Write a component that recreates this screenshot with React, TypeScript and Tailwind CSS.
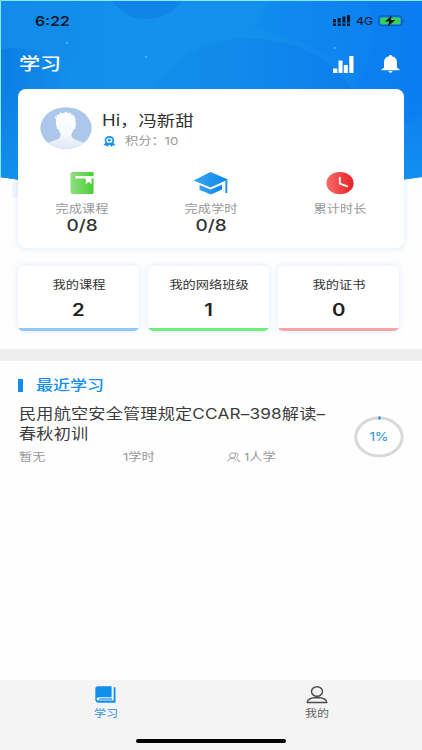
import type { ReactNode } from "react"

interface ITextProps {
  children: ReactNode
  className?: string
}

// Extended-width text, anchored to its left edge
const WideText: React.FC<ITextProps> = ({ children, className = "" }) => (
  <span
    className={`block w-max origin-left scale-x-[1.2] whitespace-pre ${className}`}
  >
    {children}
  </span>
)

// Extended-width text, centered in its parent
const CenterText: React.FC<ITextProps> = ({ children, className = "" }) => (
  <span
    className={`block w-max origin-center scale-x-[1.2] whitespace-pre ${className}`}
  >
    {children}
  </span>
)

const HeaderBackdrop = () => (
  <svg
    className="absolute left-0 top-0"
    width="422"
    height="200"
    viewBox="0 0 422 200"
  >
    <defs>
      <linearGradient id="sky" x1="0" y1="0" x2="1" y2="0">
        <stop offset="0" stopColor="#1289ea" />
        <stop offset="0.3" stopColor="#1391ec" />
        <stop offset="0.6" stopColor="#1290ec" />
        <stop offset="1" stopColor="#0c7df2" />
      </linearGradient>
      <linearGradient id="hill" x1="0" y1="0" x2="1" y2="0">
        <stop offset="0" stopColor="#0b7be2" />
        <stop offset="1" stopColor="#1390ec" />
      </linearGradient>
      <linearGradient id="side" x1="0" y1="0" x2="0" y2="1">
        <stop offset="0" stopColor="#1292ec" stopOpacity="0" />
        <stop offset="1" stopColor="#1494ee" />
      </linearGradient>
      <linearGradient id="arc" x1="0" y1="0" x2="1" y2="0">
        <stop offset="0" stopColor="#0f8aea" stopOpacity="0.4" />
        <stop offset="1" stopColor="#0a7aea" stopOpacity="0.6" />
      </linearGradient>
      <clipPath id="headerShape">
        <path d="M0 0H422V177Q211 210 0 177Z" />
      </clipPath>
    </defs>
    <path d="M12 182h20v16H12z" fill="#f1f6fe" />
    <g clipPath="url(#headerShape)">
      <rect width="422" height="200" fill="url(#sky)" />
      <path d="M104 0Q104 34 74 60Q50 46 0 48V0Z" fill="#128dea" opacity="0.5" />
      <ellipse cx="147" cy="-12" rx="38" ry="31" fill="#0f83e6" opacity="0.8" />
      <path d="M0 49C25 45 60 55 74 74V200H0Z" fill="url(#hill)" opacity="0.8" />
      <path d="M254 28Q266 2 275 0H422V140Q380 60 254 28Z" fill="#0d7ff0" opacity="0.25" />
      <path d="M151 89C180 50 212 38 248 38C300 40 333 60 352 89V120H151Z" fill="url(#arc)" />
      <rect y="90" width="422" height="110" fill="url(#side)" />
      <path d="M422 0V112L404 124L352 89Q385 50 368 0Z" fill="#0a7af3" opacity="0.4" />
      <circle cx="67" cy="43" r="1.3" fill="#3fb1f5" />
      <circle cx="146" cy="57" r="1.3" fill="#3fb1f5" />
      <circle cx="335" cy="48" r="1.3" fill="#3fa5f5" />
    </g>
    <path d="M0.5 177V0.5H422" fill="none" stroke="#8ceaf8" />
  </svg>
)

const SignalIcon = () => (
  <svg width="18" height="12" viewBox="0 0 18 12" fill="#08182c">
    <path d="M0 4h3v3.5H0zM4.7 3h3v4.5h-3zM9.4 1.5h3v6h-3zM14 0h3v7.5h-3z" />
    <path d="M0 8.6h3V11H0zM4.7 8.6h3V11h-3zM9.4 8.6h3V11h-3zM14 8.6h3V11h-3z" />
  </svg>
)

const BatteryIcon = () => (
  <svg width="27" height="12" viewBox="0 0 27 12">
    <rect x="0.7" y="1" width="23.3" height="9.6" rx="2.8" fill="none" stroke="#0b57a6" />
    <rect x="2.2" y="2.4" width="20.3" height="6.8" rx="1.5" fill="#36cf5c" />
    <path d="M25.2 4.2q1.6 1.6 0 3.2z" fill="#0b3c78" />
    <path d="M13.8 0.3L7 6.6h4.2L9.8 11.4L17.3 5h-4.6z" fill="#06121c" />
  </svg>
)

const ChartIcon = () => (
  <svg width="21" height="17" viewBox="0 0 21 17" fill="#fff">
    <path d="M0 12.5h4.3V17H0zM5.5 4.5h4V17h-4zM10.8 9h4v8h-4zM16.3 0h4.2v17h-4.2z" />
  </svg>
)

const BellIcon = () => (
  <svg width="19" height="18" viewBox="0 0 19 18" fill="#fff">
    <path d="M8 1.2a1.5 1.2 0 0 1 3 0C14.2 1.8 16 4 16 7.2V12c0 1 .8 1.5 2.3 2.2c.6.4.4 1-.3 1H1c-.7 0-.9-.6-.3-1C2.2 13.5 3 13 3 12V7.2C3 4 4.8 1.8 8 1.2z" />
    <path d="M7.4 16h4.2a2.1 1.8 0 0 1-4.2 0z" />
  </svg>
)

const Avatar = () => (
  <svg width="52" height="42" viewBox="0 0 52 42">
    <defs>
      <linearGradient id="person" x1="0" y1="0" x2="0" y2="1">
        <stop offset="0" stopColor="#fff" />
        <stop offset="0.6" stopColor="#f7f9fd" />
        <stop offset="1" stopColor="#dce7f7" />
      </linearGradient>
      <clipPath id="avatarShape">
        <ellipse cx="26" cy="21" rx="25.6" ry="20.8" />
      </clipPath>
    </defs>
    <g clipPath="url(#avatarShape)">
      <rect width="52" height="42" fill="#abc8eb" />
      <path
        d="M16 12.5L14.5 9.5L17 10L16.5 7.5L19 8L20 5.5L22.5 6.5L27 4.5L27.5 6.2L31 5.5L30.5 7.2L33.5 8L35.5 12V16L36 17L35 22L33.5 22.5L31.5 27V29.5C33 33.5 42 33.5 47 38V42H5V38C10 33.500 19 33.500 20.500 29.500V27L18.500 22.500L17 22L16 17Z"
        fill="url(#person)"
      />
    </g>
  </svg>
)

const MedalIcon = () => (
  <svg width="13" height="11" viewBox="0 0 13 11">
    <ellipse cx="6.4" cy="4.3" rx="3.9" ry="3.4" fill="none" stroke="#118ff0" strokeWidth="1.7" />
    <circle cx="6.4" cy="4.2" r="1.4" fill="#118ff0" />
    <path d="M2.6 6.6L0.5 9.6L3.3 9.4L4.3 10.8L6.4 8.4L8.5 10.8L9.5 9.4L12.3 9.6L10.2 6.6L8.5 7.7H4.3Z" fill="#118ff0" />
  </svg>
)

const CourseIcon = () => (
  <svg width="24" height="23" viewBox="0 0 24 23">
    <defs>
      <linearGradient id="green" x1="0" y1="0" x2="1" y2="0">
        <stop offset="0" stopColor="#90e080" />
        <stop offset="1" stopColor="#49ce36" />
      </linearGradient>
    </defs>
    <path d="M3 0H23.5V22H3Q0.5 22 0.5 19.5V2.5Q0.5 0 3 0Z" fill="url(#green)" />
    <path d="M5.5 4H23.5V6.6H21.5V12.2L18.6 9.8L15.8 12.2V6.6H5.5Z" fill="#fff" />
  </svg>
)

const CapIcon = () => (
  <svg width="36" height="23" viewBox="0 0 36 23">
    <defs>
      <linearGradient id="blue" x1="0" y1="0" x2="1" y2="0">
        <stop offset="0" stopColor="#3da4f2" />
        <stop offset="1" stopColor="#0787ed" />
      </linearGradient>
    </defs>
    <g fill="url(#blue)">
      <path d="M17.5 0L35 7.5L17.5 15.5L0.5 8.5Z" />
      <path d="M6.5 13L17.5 17.5L29 12.8V17.5L18 22.5L6.5 18Z" />
      <path d="M32.3 8.5L34.3 7.8V21H32.3Z" />
    </g>
  </svg>
)

const ClockIcon = () => (
  <svg width="28" height="23" viewBox="0 0 28 23">
    <defs>
      <linearGradient id="red" x1="0" y1="0" x2="1" y2="0">
        <stop offset="0" stopColor="#f76b68" />
        <stop offset="1" stopColor="#e92125" />
      </linearGradient>
    </defs>
    <ellipse cx="14" cy="11.2" rx="13.6" ry="11.1" fill="url(#red)" />
    <path d="M13.8 5V11.7L22 14.7" fill="none" stroke="#fff" strokeWidth="1.8" />
  </svg>
)

const PeopleIcon = () => (
  <svg width="15" height="11" viewBox="0 0 15 11" fill="none" stroke="#999" strokeWidth="0.9">
    <ellipse cx="5.5" cy="3.5" rx="3" ry="2.6" />
    <path d="M0.7 9.5Q1.3 6.2 5.5 6.2Q7.5 6.2 9.3 8.5" />
    <path d="M7.5 1.2Q10.8 0.3 11 3.2Q11 4.8 9.3 5.7Q11 6.5 11.5 9.2H13.3" />
  </svg>
)

const BookIcon = () => (
  <svg width="21" height="18" viewBox="0 0 21 18">
    <path d="M3 0.3H16.6V11.3H4Q1.5 11.3 1.5 13Q1.5 14.6 4 14.6H18.7V1.3H20.5V16.8H3.5Q0.3 16.5 0.3 13.5V2.8Q0.3 0.3 3 0.3Z" fill="#118fee" />
    <path d="M4 13H17" stroke="#118fee" strokeWidth="1.2" />
  </svg>
)

const UserIcon = () => (
  <svg width="22" height="18" viewBox="0 0 22 18" fill="none" stroke="#4c4c4c" strokeWidth="1.4">
    <ellipse cx="11" cy="5.5" rx="5.5" ry="4.8" />
    <path d="M1.2 16.5Q1.5 11.7 11 11.5Q20.5 11.7 20.8 16.5Z" strokeLinejoin="round" />
  </svg>
)

const ProgressRing = () => (
  <div className="relative flex h-[42px] w-[50px] items-center justify-center">
    <svg className="absolute inset-0" width="50" height="42" viewBox="0 0 50 42" fill="none">
      <ellipse cx="25" cy="21" rx="23.2" ry="19" stroke="#d9d9d9" strokeWidth="3" />
      <path d="M24.5 2H26.5" stroke="#1685d8" strokeWidth="3" />
    </svg>
    <CenterText className="text-[11.5px] leading-[12px] tracking-[-0.3px] text-[#2b8fd9]">1%</CenterText>
  </div>
)

const stats = [
  { label: "完成课程", value: "0/8", icon: <CourseIcon /> },
  { label: "完成学时", value: "0/8", icon: <CapIcon /> },
  { label: "累计时长", value: "", icon: <ClockIcon /> },
]

const cards = [
  { label: "我的课程", value: "2", line: "bg-[#93c9f0]" },
  { label: "我的网络班级", value: "1", line: "bg-[#72ed7d]" },
  { label: "我的证书", value: "0", line: "bg-[#f5a5a5]" },
]

const App = () => {
  return (
    <div className="relative flex h-[750px] w-[422px] flex-col overflow-hidden bg-[#fefefe] font-['Inter','Noto_Sans_CJK_SC',sans-serif]">
      <HeaderBackdrop />

      <header className="relative h-[89px]">
        <div className="flex h-[42px] items-center pl-[35px] pr-[17px]">
          <WideText className="pt-[2px] text-[13.2px] font-semibold text-[#08182c]">6:22</WideText>
          <div className="ml-auto flex items-center">
            <SignalIcon />
            <div className="ml-[5px] w-[22px]">
              <WideText className="pt-px text-[10px] font-medium text-[#08182c]">4G</WideText>
            </div>
            <BatteryIcon />
          </div>
        </div>
        <div className="flex h-[44px] items-center pl-[19px] pr-[22px]">
          <WideText className="pt-px text-[17.6px] font-medium text-white">学习</WideText>
          <div className="ml-auto flex items-center gap-[27px]">
            <ChartIcon />
            <BellIcon />
          </div>
        </div>
      </header>

      <section className="relative ml-[18px] h-[159px] w-[386px] rounded-[8px] bg-white shadow-[0_1px_6px_rgba(90,150,240,0.18)]">
        <div className="flex pl-[22px] pt-[18px]">
          <Avatar />
          <div className="ml-[10px] pt-[3px]">
            <WideText className="text-[15.3px] leading-[22px] text-[#333]">Hi，冯新甜</WideText>
            <div className="flex h-[18px] items-center pl-[1px]">
              <MedalIcon />
              <WideText className="ml-[9px] text-[11px] text-[#999]">积分：10</WideText>
            </div>
          </div>
        </div>
        <div className="mt-[22px] flex">
          {stats.map((stat) => (
            <div key={stat.label} className="flex flex-1 flex-col items-center">
              {stat.icon}
              <CenterText className="mt-[7px] text-[11px] leading-[15px] text-[#999]">
                {stat.label}
              </CenterText>
              <CenterText className="text-[15.8px] leading-[17px] font-medium text-[#333]">
                {stat.value}
              </CenterText>
            </div>
          ))}
        </div>
      </section>

      <section className="mt-[18px] flex gap-[9px] pl-[18px]">
        {cards.map((card) => (
          <div
            key={card.label}
            className="flex h-[65px] w-[121px] flex-col items-center overflow-hidden rounded-[5px] bg-white shadow-[0_0_6px_rgba(90,150,240,0.2)]"
          >
            <CenterText className="mt-[11px] text-[11px] leading-[16px] text-[#333]">
              {card.label}
            </CenterText>
            <CenterText className="mt-[7px] text-[17px] leading-[20px] font-semibold text-[#222]">
              {card.value}
            </CenterText>
            <div className={`mt-auto h-[3px] w-full ${card.line}`} />
          </div>
        ))}
      </section>

      <div className="mt-[18px] h-[12px] bg-[#eee]" />

      <main className="flex-1 pl-[18px]">
        <div className="flex h-[24px] items-center pt-[24px]">
          <div className="h-[13px] w-[5px] bg-[#118ff0]" />
          <WideText className="ml-[13px] text-[14.2px] leading-[18px] font-medium text-[#118ff0]">
            最近学习
          </WideText>
        </div>
        <div className="mt-[19px] flex">
          <div className="w-[336px] pl-px">
            <WideText className="text-[14.3px] leading-[19.6px] tracking-[0.15px] text-[#3c3c3c]">
              {"民用航空安全管理规定CCAR–398解读–\n春秋初训"}
            </WideText>
            <div className="mt-[6px] flex h-[16px] items-center text-[11px] text-[#999]">
              <div className="w-[104px]">
                <WideText>暂无</WideText>
              </div>
              <div className="w-[104px]">
                <WideText>1学时</WideText>
              </div>
              <PeopleIcon />
              <WideText className="ml-[2px]">1人学</WideText>
            </div>
          </div>
          <div className="pt-[12px]">
            <ProgressRing />
          </div>
        </div>
      </main>

      <nav className="flex h-[70px] flex-col bg-[#f4f4f4]">
        <div className="flex h-[59px] pt-[6px]">
          <div className="flex flex-1 flex-col items-center">
            <BookIcon />
            <CenterText className="mt-[1px] text-[10px] leading-[16px] text-[#2c95e8]">学习</CenterText>
          </div>
          <div className="flex flex-1 flex-col items-center">
            <UserIcon />
            <CenterText className="mt-[1px] text-[10px] leading-[16px] text-[#666]">我的</CenterText>
          </div>
        </div>
        <div className="mx-auto h-[4px] w-[150px] rounded-full bg-black" />
      </nav>
    </div>
  )
}

export default App
